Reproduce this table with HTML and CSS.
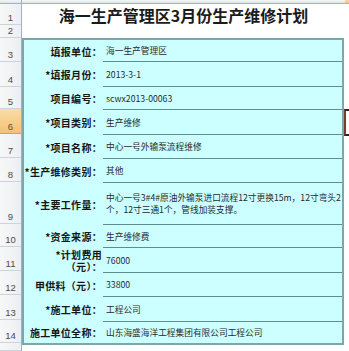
FILE: index.html
```html
<!DOCTYPE html>
<html lang="zh-CN">
<head>
<meta charset="utf-8">
<title>海一生产管理区3月份生产维修计划</title>
<link rel="stylesheet" href="styles.css">
</head>
<body>
<div class="sheet">
  <div class="rowhead">
    <div class="corner"></div>
    <div class="rh h21">1</div>
    <div class="rh h13">2</div>
    <div class="rh h24">3</div>
    <div class="rh h25">4</div>
    <div class="rh h23">5</div>
    <div class="rh h25 sel">6</div>
    <div class="rh h24">7</div>
    <div class="rh h24">8</div>
    <div class="rh h42">9</div>
    <div class="rh h23">10</div>
    <div class="rh h25">11</div>
    <div class="rh h24">12</div>
    <div class="rh h25">13</div>
    <div class="rh h23">14</div>
    <div class="rh h8"></div>
  </div>
  <div class="main">
    <div class="colhead">
      <div class="ch ch-a"></div>
      <div class="ch ch-sel"></div>
    </div>
    <div class="title">海一生产管理区3月份生产维修计划</div>
    <div class="blank"></div>
    <div class="body">
      <div class="form">
        <div class="frow h22">
          <div class="label">填报单位：</div>
          <div class="value">海一生产管理区</div>
        </div>
        <div class="frow h25">
          <div class="label">*填报月份：</div>
          <div class="value">2013-3-1</div>
        </div>
        <div class="frow h23">
          <div class="label">项目编号：</div>
          <div class="value">scwx2013-00063</div>
        </div>
        <div class="frow h25">
          <div class="label">*项目类别：</div>
          <div class="value">生产维修</div>
        </div>
        <div class="frow h24">
          <div class="label">*项目名称：</div>
          <div class="value">中心一号外输泵流程维修</div>
        </div>
        <div class="frow h24">
          <div class="label">*生产维修类别：</div>
          <div class="value">其他</div>
        </div>
        <div class="frow h42">
          <div class="label">*主要工作量：</div>
          <div class="value multi">中心一号3#4#原油外输泵进口流程12寸更换15m，12寸弯头2<br>个，12寸三通1个，管线加装支撑。</div>
        </div>
        <div class="frow h23">
          <div class="label">*资金来源：</div>
          <div class="value">生产维修费</div>
        </div>
        <div class="frow h25">
          <div class="label two">*计划费用<br>（元）：</div>
          <div class="value">76000</div>
        </div>
        <div class="frow h24">
          <div class="label">甲供料（元）：</div>
          <div class="value">33800</div>
        </div>
        <div class="frow h25">
          <div class="label">*施工单位：</div>
          <div class="value">工程公司</div>
        </div>
        <div class="frow h21 last">
          <div class="label">施工单位全称：</div>
          <div class="value">山东海盛海洋工程集团有限公司工程公司</div>
        </div>
      </div>
      <div class="outside"></div>
    </div>
  </div>
  <div class="selection"></div>
</div>
</body>
</html>
```
FILE: styles.css
```css
* { box-sizing: border-box; }
html, body { margin: 0; padding: 0; background: #ffffff; }
body { font-family: "Noto Sans CJK SC", sans-serif; overflow: hidden; }

.sheet {
  position: relative;
  display: flex;
  width: 349px;
  height: 351px;
  overflow: hidden;
}

/* row headers */
.rowhead {
  width: 22px;
  flex: none;
  display: flex;
  flex-direction: column;
  border-right: 1px solid #9fb3c8;
  background: linear-gradient(90deg, #f7f7f7, #eceff3);
}
.corner {
  height: 4px;
  border-bottom: 1px solid #9fb3c8;
  background: linear-gradient(#f3f5f8, #dfe5ec);
}
.rh {
  display: flex;
  align-items: flex-end;
  justify-content: center;
  border-bottom: 1px solid #ccd3dc;
  font-family: "Liberation Sans", sans-serif;
  font-size: 9.5px;
  line-height: 10px;
  color: #4b4b4b;
  padding-bottom: 1px;
}
.rh.sel {
  background: linear-gradient(#fadca6, #f3c275);
  border-bottom-color: #d7a14f;
  color: #5a4a3a;
}

.h8 { height: 8px; }
.h13 { height: 13px; }
.h21 { height: 21px; }
.h22 { height: 22px; }
.h23 { height: 23px; }
.h24 { height: 24px; }
.h25 { height: 25px; }
.h42 { height: 42px; }

/* main area */
.main {
  flex: 1;
  display: flex;
  flex-direction: column;
}
.colhead {
  height: 4px;
  display: flex;
  border-bottom: 1px solid #9fb3c8;
}
.ch-a {
  flex: 1;
  background: linear-gradient(#f3f5f8, #dfe5ec);
}
.ch-sel {
  width: 4px;
  background: linear-gradient(#fadca6, #f3c275);
}
.title {
  height: 21px;
  padding-top: 1px;
  padding-right: 4px;
  text-align: center;
  font-size: 16px;
  line-height: 21px;
  font-weight: 700;
  color: #1b1b1b;
  white-space: nowrap;
}
.blank { height: 13px; }

.body {
  display: flex;
}
.form {
  width: 322px;
  border: 2px solid #7ea6a6;
  background: #ccffff;
  display: flex;
  flex-direction: column;
}
.outside { flex: 1; }

.frow {
  display: flex;
}
.label {
  width: 79px;
  flex: none;
  display: flex;
  align-items: center;
  justify-content: flex-end;
  text-align: right;
  padding-right: 1px;
  font-size: 10px;
  font-weight: 700;
  letter-spacing: 0.3px;
  color: #161616;
  white-space: nowrap;
}
.label.two {
  line-height: 12px;
}
.value {
  flex: 1;
  display: flex;
  align-items: center;
  padding-left: 3px;
  border-bottom: 1px solid #5f8c8c;
  font-size: 8.7px;
  color: #2a2a2a;
  white-space: nowrap;
}
.value.multi {
  line-height: 12px;
}
.frow.last .value { border-bottom: none; }

.selection {
  position: absolute;
  left: 344px;
  top: 109px;
  width: 12px;
  height: 27px;
  border: 2px solid #262626;
  border-left-color: #7d3a2c;
}
```
